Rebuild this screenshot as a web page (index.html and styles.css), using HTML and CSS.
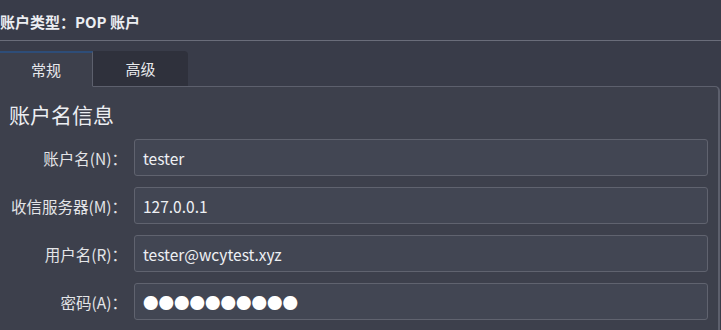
FILE: index.html
```html
<!DOCTYPE html>
<html lang="zh">
<head>
<meta charset="utf-8">
<link rel="stylesheet" href="styles.css">
</head>
<body>
<div class="page">
  <div class="header">账户类型：POP 账户</div>
  <div class="tabs">
    <div class="tab active">常规</div>
    <div class="tab">高级</div>
  </div>
  <div class="panel">
    <div class="section-title">账户名信息</div>
    <div class="form">
      <label class="label">账户名(N)：</label>
      <div class="input">tester</div>
      <label class="label">收信服务器(M)：</label>
      <div class="input">127.0.0.1</div>
      <label class="label">用户名(R)：</label>
      <div class="input">tester@wcytest.xyz</div>
      <label class="label">密码(A)：</label>
      <div class="input password">●●●●●●●●●●</div>
    </div>
  </div>
</div>
</body>
</html>
```

FILE: styles.css
```css
html, body {
  margin: 0;
  padding: 0;
}
body {
  background: #393c49;
  width: 721px;
  height: 330px;
  overflow: hidden;
  font-family: "Noto Sans CJK SC", "Noto Sans", sans-serif;
  color: #e4e5e8;
}
.page {
  display: flex;
  flex-direction: column;
  height: 330px;
}
.header {
  height: 41px;
  box-sizing: border-box;
  padding-top: 12px;
  font-size: 15px;
  font-weight: 700;
  line-height: 20px;
  border-bottom: 1px solid #6a6d7a;
  color: #eceef2;
  flex: none;
}
.tabs {
  display: flex;
  align-items: flex-end;
  margin-top: 10px;
  height: 36px;
  position: relative;
  z-index: 1;
  margin-bottom: -1px;
  flex: none;
}
.tab {
  width: 95px;
  height: 36px;
  box-sizing: border-box;
  display: flex;
  align-items: center;
  justify-content: center;
  font-size: 15px;
  background: #2f313c;
  border-radius: 0 4px 0 0;
  border-bottom: 1px solid #5d606d;
  color: #e8e9ec;
}
.tab.active {
  width: 93px;
  height: 36px;
  background: #3d404c;
  border-top: 2px solid #2e4d78;
  border-right: 1px solid #5d606d;
  border-bottom: 1px solid #3d404c;
  border-radius: 0;
}
.panel {
  background: #3d404c;
  border-top: 1px solid #5d606d;
  border-right: 2px solid #5d606d;
  border-radius: 0 5px 0 0;
  margin-right: 1px;
  flex: 1;
  min-height: 0;
  overflow: hidden;
  display: flex;
  flex-direction: column;
}
.section-title {
  font-size: 21px;
  line-height: 28px;
  padding: 13px 0 0 9px;
  color: #eceef2;
}
.form {
  display: grid;
  grid-template-columns: 127px 574px;
  column-gap: 7px;
  row-gap: 11px;
  margin-top: 11px;
  align-items: center;
}
.label {
  text-align: right;
  font-size: 15.5px;
  color: #e4e5e8;
}
.input {
  height: 37px;
  box-sizing: border-box;
  border: 1px solid #60636f;
  border-radius: 3px;
  background: #424653;
  padding: 0 8px;
  display: flex;
  align-items: center;
  font-size: 15.5px;
  color: #eef0f3;
}
.password {
  font-size: 15.5px;
  letter-spacing: 0;
  color: #ffffff;
}
```
